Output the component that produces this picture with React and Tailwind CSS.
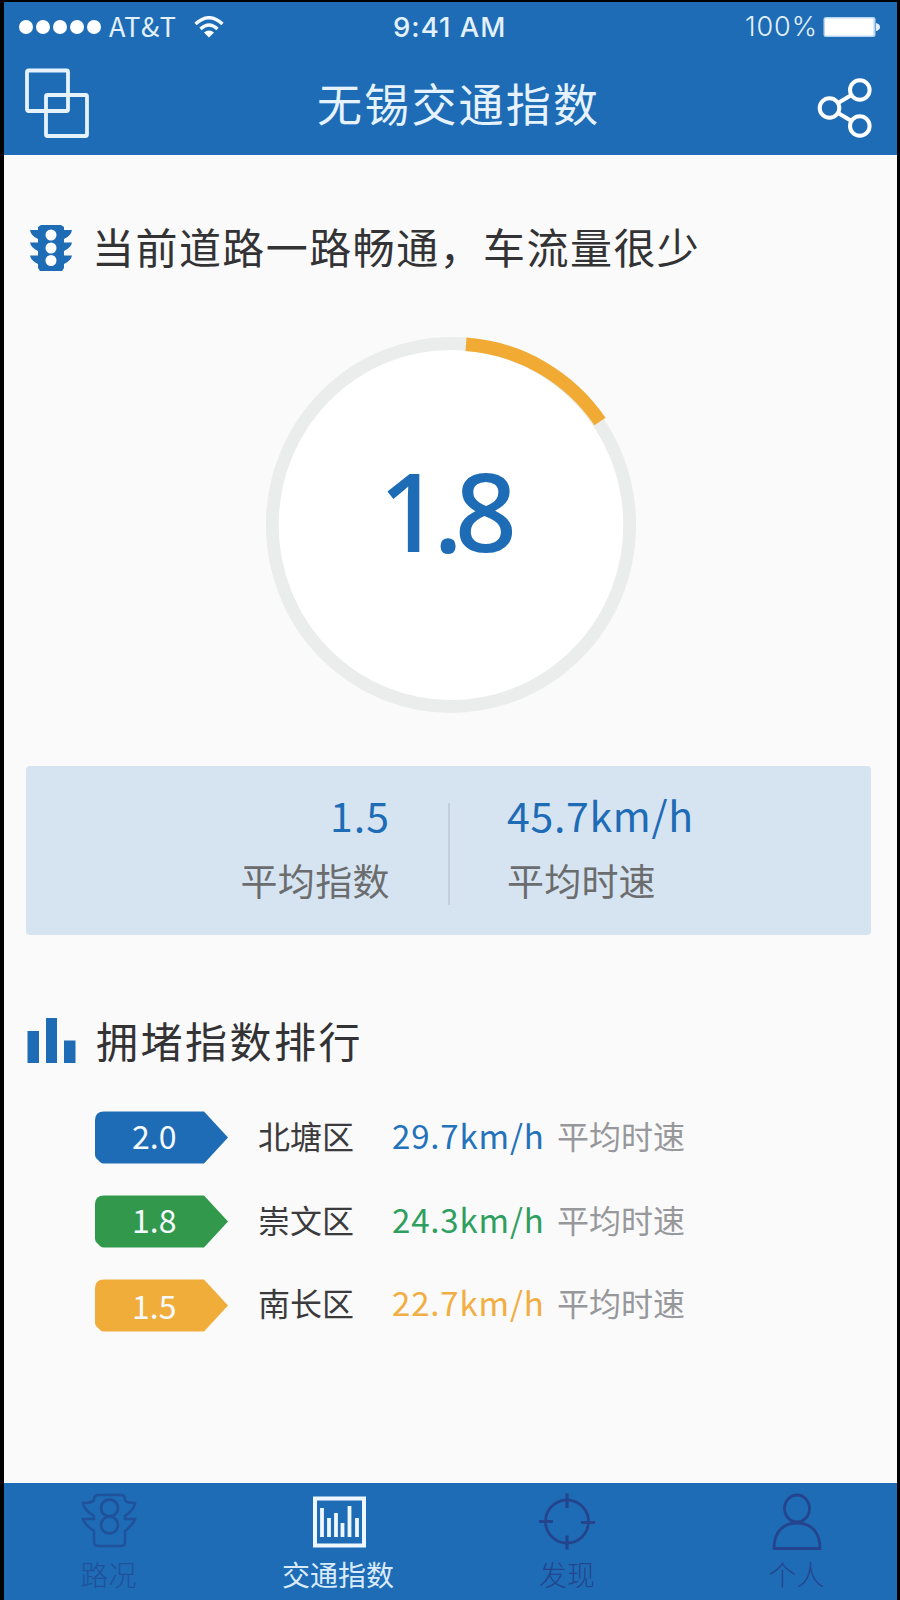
import React from "react";

const BLUE = "#1e6cb6";

function StatusBar() {
  return (
    <div className="flex h-[49px] items-center text-[#e3f1fc]">
      <div className="flex w-[105px] shrink-0 gap-[3px] pl-[15px]">
        {[0, 1, 2, 3, 4].map((i) => (
          <span key={i} className="h-[14px] w-[14px] rounded-full bg-white" />
        ))}
      </div>
      <div className="mb-[2px] w-[85px] shrink-0 whitespace-nowrap font-['Noto_Sans_CJK_SC',sans-serif] text-[27px] leading-[46px] font-normal tracking-[0.5px]">
        AT&amp;T
      </div>
      <svg className="shrink-0" width="30" height="22" viewBox="0 0 30 22" fill="none" stroke="#f2f9ff" strokeWidth="3.4">
        <path d="M1.5 8Q15-4.5 28.5 8" />
        <path d="M6.5 13Q15 5 23.5 13" />
        <path d="M15 21.5L10 16.6Q15 12.6 20 16.6Z" fill="#ffffff" stroke="none" />
      </svg>
      <div className="mt-[1px] ml-[169px] w-[352px] shrink-0 whitespace-nowrap font-['Inter',sans-serif] text-[27.500px] font-medium leading-[46px] tracking-[1px]">
        9:41 AM
      </div>
      <div className="mt-[1px] w-[78px] shrink-0 whitespace-nowrap font-['Inter',sans-serif] text-[27px] font-light leading-[46px] tracking-[0.9px]">
        100%
      </div>
      <svg className="shrink-0" width="57" height="22" viewBox="0 0 57 22">
        <rect x="0.5" y="1" width="52" height="20" rx="2.5" fill="#b9d7f2" />
        <rect x="2" y="2.5" width="48.500" height="17" rx="1" fill="#ffffff" />
        <path d="M53 7Q57 8 57 11T53 15Z" fill="#e3f1fc" />
      </svg>
    </div>
  );
}

function Header() {
  return (
    <header className="h-[153px] bg-[#1e6cb6]">
      <StatusBar />
      <div className="flex h-[104px] items-center">
        <svg className="ml-[20px] shrink-0" width="66" height="72" viewBox="0 0 66 72" fill="none" stroke="#e6f3fe" strokeWidth="3.8">
          <rect x="3" y="3.500" width="41" height="40.500" rx="1.5" />
          <rect x="22" y="28" width="41" height="41" rx="1.5" />
        </svg>
        <h1 className="ml-[227px] w-[496px] shrink-0 whitespace-nowrap font-['Noto_Sans_CJK_SC',sans-serif] text-[45px] font-normal leading-[104px] tracking-[2.2px] text-[#e6f3fe]">
          无锡交通指数
        </h1>
        <svg className="mt-[9px] shrink-0" width="60" height="62" viewBox="0 0 60 62" fill="none" stroke="#ffffff" strokeWidth="4">
          <circle cx="16.500" cy="31" r="9.8" />
          <circle cx="46.8" cy="13" r="9.8" />
          <circle cx="46.8" cy="49" r="9.8" />
          <path d="M25 26L38.500 18M25 36L38.500 44" />
        </svg>
      </div>
    </header>
  );
}

function TrafficLight() {
  return (
    <svg className="mt-[2px] shrink-0" width="44" height="48" viewBox="0 0 44 48">
      <path
        fill={BLUE}
        d="M9 3L12 1H32L35 3V6H43Q42 12 35 15V18.500H43Q42 24 35 27V31.500H43Q42 37 35 40V44L33 47H11L9 44V40Q2 37 1 31.500H9V27Q2 24 1 18.500H9V15Q2 12 1 6H9Z"
      />
      <circle cx="22" cy="11" r="5.500" fill="#fff" />
      <circle cx="22" cy="24" r="5.500" fill="#fff" />
      <circle cx="22" cy="36.500" r="5.500" fill="#fff" />
    </svg>
  );
}

function Gauge() {
  return (
    <div className="mt-[50px] ml-[262px] grid h-[376px] w-[370px] place-items-center">
      <svg className="col-start-1 row-start-1" width="370" height="376" viewBox="0 0 370 376" fill="none">
        <ellipse cx="185" cy="188" rx="178.700" ry="181.500" fill="#ffffff" stroke="#ebecec" strokeWidth="12.800" />
        <path d="M200 7.300A178.700 181.500 0 0 1 334 84.500" stroke="#f1ab35" strokeWidth="13.500" />
      </svg>
      <div className="z-10 col-start-1 row-start-1 mr-[14px] mb-[30px] whitespace-nowrap font-['Noto_Sans',sans-serif] text-[109px] font-medium leading-[120px] tracking-[-8px] text-[#1e6cb6]">
        1.8
      </div>
    </div>
  );
}

function Averages() {
  return (
    <section className="mt-[53px] ml-[22px] flex h-[169px] w-[845px] items-center rounded-[4px] bg-[#d6e4f1] font-['Noto_Sans_CJK_SC',sans-serif]">
      <div className="mb-[7px] flex w-[364px] shrink-0 flex-col items-end whitespace-nowrap">
        <div className="h-[64px] text-[41px] leading-[62px] tracking-[1px] text-[#1e6cb6]">1.5</div>
        <div className="h-[64px] text-[37px] leading-[66px] tracking-[0.4px] text-[#6b6c6e]">平均指数</div>
      </div>
      <div className="mt-[7px] ml-[58px] h-[102px] w-[2px] bg-[#c3ced9]" />
      <div className="mb-[7px] ml-[57px] flex flex-col whitespace-nowrap">
        <div className="h-[64px] text-[41px] leading-[62px] tracking-[0.7px] text-[#1e6cb6]">45.7km/h</div>
        <div className="h-[64px] text-[37px] leading-[66px] tracking-[0.2px] text-[#6b6c6e]">平均时速</div>
      </div>
    </section>
  );
}

const rows = [
  { value: "2.0", name: "北塘区", speed: "29.7km/h", fill: "#1e6cb6", text: "text-[#2372ba]", lift: "mb-[6px]" },
  { value: "1.8", name: "崇文区", speed: "24.3km/h", fill: "#32994c", text: "text-[#2f9f60]", lift: "mb-[5px]" },
  { value: "1.5", name: "南长区", speed: "22.7km/h", fill: "#f1ad3a", text: "text-[#f0ae43]", lift: "mb-[1px]" },
];

function Ranking() {
  return (
    <section className="mt-[75px] font-['Noto_Sans_CJK_SC',sans-serif]">
      <div className="flex h-[62px] items-center">
        <svg className="ml-[23px] shrink-0" width="50" height="48" viewBox="0 0 50 48" fill={BLUE}>
          <rect x="0.500" y="14" width="11.500" height="32" />
          <rect x="19" y="1" width="11" height="45" />
          <rect x="37" y="23.500" width="11.500" height="22.500" />
        </svg>
        <h2 className="mb-[3px] ml-[19px] whitespace-nowrap text-[42px] leading-[59px] tracking-[2.500px] text-[#333335]">拥堵指数排行</h2>
      </div>
      <div className="mt-[24px] flex flex-col">
        {rows.map((r) => (
          <div key={r.name} className="flex h-[83.700px] items-center whitespace-nowrap">
            <div className="ml-[91px] grid h-[53px] w-[134px] shrink-0 items-center">
              <svg className="col-start-1 row-start-1" width="134" height="53" viewBox="0 0 134 53">
                <path d="M9 0.500H109L133 26.500L109 52.500H9Q6.500 52.500 5 51L1.500 47.500Q0 46 0 43.500V9Q0 0.500 9 0.500Z" fill={r.fill} />
              </svg>
              <span className={"z-10 col-start-1 row-start-1 pl-[37px] text-[32px] leading-[46px] text-[#f4f9fe] " + r.lift}>{r.value}</span>
            </div>
            <span className="mb-[6px] ml-[29px] w-[134px] shrink-0 text-[32px] leading-[50px] text-[#3b3b3d]">{r.name}</span>
            <span className={"mb-[6px] w-[165px] shrink-0 text-[33px] leading-[50px] tracking-[0.850px] " + r.text}>{r.speed}</span>
            <span className="mb-[6px] text-[32px] leading-[50px] text-[#97989b]">平均时速</span>
          </div>
        ))}
      </div>
    </section>
  );
}

function Tab({ label, className, children }) {
  return (
    <div className={"flex shrink-0 flex-col items-center whitespace-nowrap " + className}>
      <svg className="mt-[8px]" width="60" height="60" viewBox="0 0 60 60" fill="none" stroke="currentColor" strokeWidth="2.800">
        {children}
      </svg>
      <span className="mt-[3px] text-[28px] leading-[40px]">{label}</span>
    </div>
  );
}

function TabBar() {
  return (
    <nav className="flex h-[117px] bg-[#1e6cb6] font-['Noto_Sans_CJK_SC',sans-serif]">
      <Tab label="路况" className="w-[209px] font-light text-[#20519b]">
        <path d="M20 4H41Q46 4 46 8V9Q47 12 56 12Q55 19 46 25V28H56Q54 34 46 40V51Q46 55 42 55H19Q15 55 15 51V40Q6 34 4 28H15V25Q5 19 4 12Q14 12 15 9V8Q15 4 20 4Z" strokeWidth="2.500" />
        <circle cx="30.500" cy="17" r="8.500" />
        <circle cx="30.500" cy="34" r="8.500" />
      </Tab>
      <Tab label="交通指数" className="w-[250px] font-normal text-[#d9ebfb]">
        <rect x="7" y="7.500" width="49" height="47" stroke="#eef7ff" strokeWidth="4" />
        <path d="M14 17V46M21 27V46M28 22V46M34.500 32V46M41.500 15V46M49 27V46" stroke="#eef7ff" strokeWidth="3.800" />
      </Tab>
      <Tab label="发现" className="w-[208px] font-light text-[#24458e]">
        <circle cx="30" cy="30.500" r="21.500" />
        <path d="M30 2.500V17M30 44.500V58.500M2 30.500H16M44 31.500H58" strokeWidth="3.200" />
      </Tab>
      <Tab label="个人" className="w-[226px] pl-[25px] font-light text-[#24458e]">
        <ellipse cx="30" cy="17.500" rx="12.500" ry="13.500" />
        <path d="M7 57.500C7 42 15 32 30 32S53 42 53 57.500Z" />
      </Tab>
    </nav>
  );
}

export default function App() {
  return (
    <div className="h-[1600px] w-[900px] overflow-hidden bg-black pt-[2px] pr-[3px] pl-[4px]">
      <div className="flex h-[1598px] w-[893px] flex-col bg-[#fafafa]">
        <Header />
        <main className="h-[1328px] shrink-0 border-t border-b border-white">
          <div className="mt-[51px] flex h-[80px] items-center pl-[25px]">
            <TrafficLight />
            <h2 className="mb-[3px] ml-[19px] whitespace-nowrap font-['Noto_Sans_CJK_SC',sans-serif] text-[42px] leading-[77px] tracking-[1.450px] text-[#333335]">
              当前道路一路畅通，车流量很少
            </h2>
          </div>
          <Gauge />
          <Averages />
          <Ranking />
        </main>
        <TabBar />
      </div>
    </div>
  );
}
